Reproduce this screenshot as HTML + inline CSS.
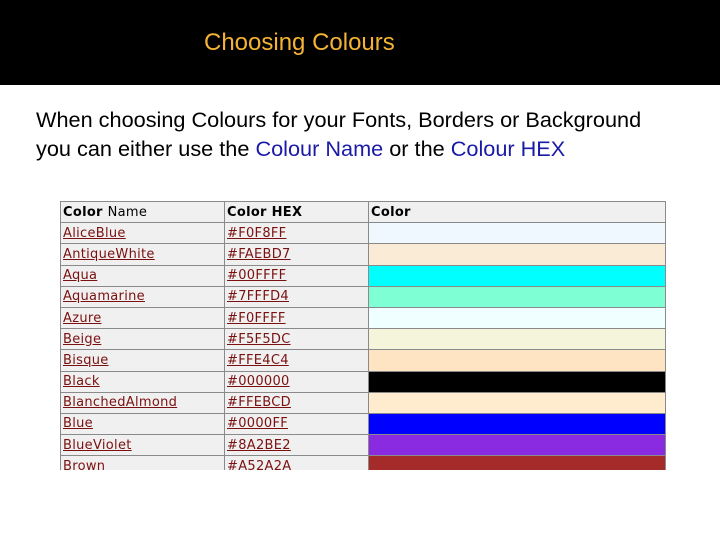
<!DOCTYPE html>
<html><head><style>
body{margin:0;width:720px;height:540px;background:#fff;overflow:hidden;position:relative;font-family:"Liberation Sans",sans-serif}
.top{position:absolute;left:0;top:0;width:720px;height:85px;background:#000}
.title{position:absolute;left:204px;top:29px;color:#f5b335;font-size:24px}
.txt{position:absolute;left:36px;top:105px;font-size:21.7px;line-height:29px;color:#000}
.b{color:#1a1aa6}
table{position:absolute;left:60px;top:201px;border-collapse:collapse;font-family:"DejaVu Sans",sans-serif;font-size:13px;letter-spacing:0.3px}
td{border:1px solid #8a8a8a;height:21.2px;padding:0 0 0 2px;background:#f0f0f0;color:#7a1010;text-decoration:underline;box-sizing:border-box}
td.c{width:297px;padding:0}
tr.h td{color:#000;text-decoration:none;font-weight:bold}
tr.h td span{font-weight:normal}
.wrap{position:absolute;left:0;top:0;width:720px;height:470px;overflow:hidden}
</style></head><body>
<div class="top"></div>
<div class="title">Choosing Colours</div>
<div class="txt">When choosing Colours for your Fonts, Borders or Background<br>you can either use the <span class="b">Colour Name</span> or the <span class="b">Colour HEX</span></div>
<div class="wrap">
<table>
<tr class="h"><td style="width:164px">Color <span>Name</span></td><td style="width:144px">Color HEX</td><td class="c" style="padding-left:2px">Color</td></tr>
<tr><td>AliceBlue</td><td>#F0F8FF</td><td class="c" style="background:#F0F8FF"></td></tr>
<tr><td>AntiqueWhite</td><td>#FAEBD7</td><td class="c" style="background:#FAEBD7"></td></tr>
<tr><td>Aqua</td><td>#00FFFF</td><td class="c" style="background:#00FFFF"></td></tr>
<tr><td>Aquamarine</td><td>#7FFFD4</td><td class="c" style="background:#7FFFD4"></td></tr>
<tr><td>Azure</td><td>#F0FFFF</td><td class="c" style="background:#F0FFFF"></td></tr>
<tr><td>Beige</td><td>#F5F5DC</td><td class="c" style="background:#F5F5DC"></td></tr>
<tr><td>Bisque</td><td>#FFE4C4</td><td class="c" style="background:#FFE4C4"></td></tr>
<tr><td>Black</td><td>#000000</td><td class="c" style="background:#000000"></td></tr>
<tr><td>BlanchedAlmond</td><td>#FFEBCD</td><td class="c" style="background:#FFEBCD"></td></tr>
<tr><td>Blue</td><td>#0000FF</td><td class="c" style="background:#0000FF"></td></tr>
<tr><td>BlueViolet</td><td>#8A2BE2</td><td class="c" style="background:#8A2BE2"></td></tr>
<tr><td>Brown</td><td>#A52A2A</td><td class="c" style="background:#A52A2A"></td></tr>
</table>
</div>
</body></html>
